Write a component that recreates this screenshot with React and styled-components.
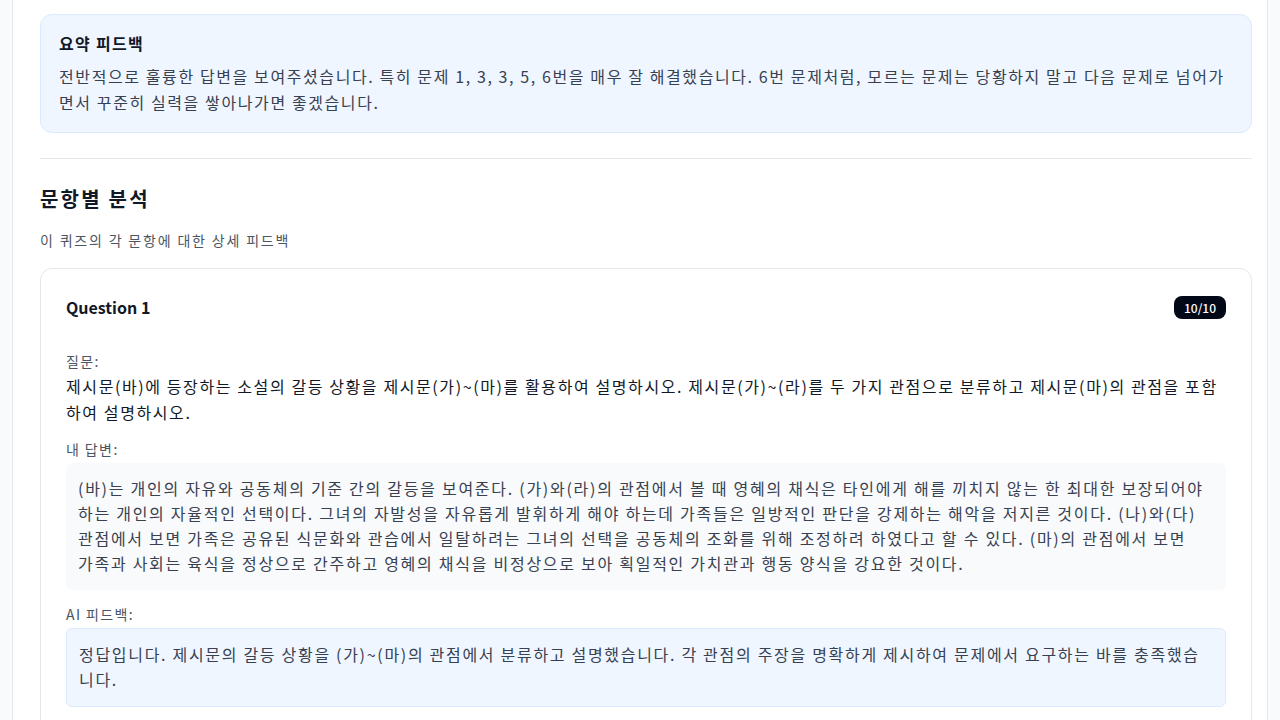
import React from "react";
import styled, { createGlobalStyle } from "styled-components";

const GlobalStyle = createGlobalStyle`
  html, body {
    margin: 0;
    padding: 0;
    background: #f9fafb;
    font-family: "Noto Sans CJK KR", "Noto Sans", sans-serif;
    color: #111827;
    overflow: hidden;
  }
  * { box-sizing: border-box; }
`;

const summary =
  "전반적으로 훌륭한 답변을 보여주셨습니다. 특히 문제 1, 3, 3, 5, 6번을 매우 잘 해결했습니다. 6번 문제처럼, 모르는 문제는 당황하지 말고 다음 문제로 넘어가면서 꾸준히 실력을 쌓아나가면 좋겠습니다.";

const questions = [
  {
    id: 1,
    score: "10/10",
    question:
      "제시문(바)에 등장하는 소설의 갈등 상황을 제시문(가)~(마)를 활용하여 설명하시오. 제시문(가)~(라)를 두 가지 관점으로 분류하고 제시문(마)의 관점을 포함하여 설명하시오.",
    answer:
      "(바)는 개인의 자유와 공동체의 기준 간의 갈등을 보여준다. (가)와(라)의 관점에서 볼 때 영혜의 채식은 타인에게 해를 끼치지 않는 한 최대한 보장되어야 하는 개인의 자율적인 선택이다. 그녀의 자발성을 자유롭게 발휘하게 해야 하는데 가족들은 일방적인 판단을 강제하는 해악을 저지른 것이다. (나)와(다) 관점에서 보면 가족은 공유된 식문화와 관습에서 일탈하려는 그녀의 선택을 공동체의 조화를 위해 조정하려 하였다고 할 수 있다. (마)의 관점에서 보면 가족과 사회는 육식을 정상으로 간주하고 영혜의 채식을 비정상으로 보아 획일적인 가치관과 행동 양식을 강요한 것이다.",
    feedback:
      "정답입니다. 제시문의 갈등 상황을 (가)~(마)의 관점에서 분류하고 설명했습니다. 각 관점의 주장을 명확하게 제시하여 문제에서 요구하는 바를 충족했습니다.",
  },
];

export default function App() {
  return (
    <>
      <GlobalStyle />
      <Page>
        <Panel>
          <SummaryBox>
            <SummaryTitle>요약 피드백</SummaryTitle>
            <SummaryText>{summary}</SummaryText>
          </SummaryBox>
          <Divider />
          <SectionTitle>문항별 분석</SectionTitle>
          <SectionSub>이 퀴즈의 각 문항에 대한 상세 피드백</SectionSub>
          {questions.map((q) => (
            <QuestionCard key={q.id}>
              <CardHeader>
                <QuestionTitle>Question {q.id}</QuestionTitle>
                <ScoreBadge>{q.score}</ScoreBadge>
              </CardHeader>
              <Label>질문:</Label>
              <QuestionText>{q.question}</QuestionText>
              <Label>내 답변:</Label>
              <AnswerBox>{q.answer}</AnswerBox>
              <Label>AI 피드백:</Label>
              <FeedbackBox>{q.feedback}</FeedbackBox>
            </QuestionCard>
          ))}
        </Panel>
      </Page>
    </>
  );
}

const Page = styled.div`
  padding: 0 12px;
  height: 720px;
  overflow: hidden;
`;

const Panel = styled.div`
  background: #ffffff;
  border-left: 1px solid #e5e7eb;
  border-right: 1px solid #e5e7eb;
  padding: 14px 15px 0 27px;
  min-height: 720px;
`;

const SummaryBox = styled.div`
  background: #eff6ff;
  border: 1px solid #dbeafe;
  border-radius: 12px;
  padding: 16px 18px 17px;
`;

const SummaryTitle = styled.div`
  font-size: 16px;
  font-weight: 700;
  line-height: 24px;
  letter-spacing: 0.08em;
  margin-bottom: 8px;
`;

const SummaryText = styled.div`
  font-size: 16px;
  line-height: 26px;
  letter-spacing: 0.1em;
  color: #374151;
`;

const Divider = styled.div`
  height: 1px;
  background: #e5e7eb;
  margin: 25px 0 24px;
`;

const SectionTitle = styled.h2`
  margin: 0;
  font-size: 20px;
  font-weight: 700;
  line-height: 32px;
  letter-spacing: 0.11em;
`;

const SectionSub = styled.div`
  font-size: 14px;
  color: #4b5563;
  line-height: 20px;
  letter-spacing: 0.13em;
  margin-top: 15px;
  margin-bottom: 18px;
`;

const QuestionCard = styled.div`
  border: 1px solid #e5e7eb;
  border-radius: 12px;
  padding: 24px 25px 24px;
`;

const CardHeader = styled.div`
  display: flex;
  align-items: center;
  justify-content: space-between;
  margin-bottom: 30px;
`;

const QuestionTitle = styled.div`
  font-size: 16px;
  font-weight: 700;
  line-height: 28px;
`;

const ScoreBadge = styled.span`
  background: #020817;
  color: #ffffff;
  font-size: 12px;
  font-weight: 500;
  line-height: 17px;
  padding: 3px 10px;
  border-radius: 8px;
`;

const Label = styled.div`
  font-size: 14px;
  color: #4b5563;
  line-height: 20px;
  letter-spacing: 0.1em;
  margin-bottom: 2px;
`;

const QuestionText = styled.div`
  font-size: 16px;
  line-height: 26px;
  letter-spacing: 0.1em;
  margin-bottom: 14px;
`;

const AnswerBox = styled.div`
  background: #f9fafb;
  border-radius: 6px;
  padding: 13px 18px 14px 12px;
  font-size: 16px;
  line-height: 25px;
  letter-spacing: 0.108em;
  color: #374151;
  margin-top: 4px;
  margin-bottom: 14px;
`;

const FeedbackBox = styled.div`
  background: #eff6ff;
  border: 1px solid #dbeafe;
  border-radius: 6px;
  padding: 13px 12px 14px;
  font-size: 16px;
  line-height: 25px;
  letter-spacing: 0.106em;
  color: #374151;
  margin-top: 4px;
`;
